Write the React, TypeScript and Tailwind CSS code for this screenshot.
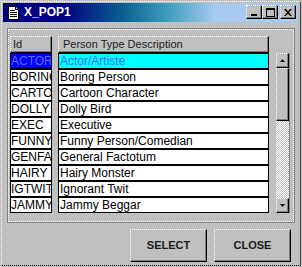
import React from "react";

const rows: [string, string][] = [
  ["ACTOR", "Actor/Artiste"],
  ["BORING", "Boring Person"],
  ["CARTOON", "Cartoon Character"],
  ["DOLLY", "Dolly Bird"],
  ["EXEC", "Executive"],
  ["FUNNY", "Funny Person/Comedian"],
  ["GENFAC", "General Factotum"],
  ["HAIRY", "Hairy Monster"],
  ["IGTWIT", "Ignorant Twit"],
  ["JAMMY", "Jammy Beggar"],
];

const raised =
  "bg-[#c0c0c0] border border-t-white border-l-white border-r-black border-b-black [border-style:dotted_solid_solid_dotted] shadow-[inset_-1px_-1px_0_#808080]";

function DocIcon() {
  return (
    <svg width="11" height="14" viewBox="0 0 11 14">
      <path d="M0.5 0.5 H7.5 L10.5 3.5 V13.5 H0.5 Z" fill="#ffffff" stroke="#000000" />
      <path d="M7.5 0.5 V3.5 H10.5" fill="#c0c0c0" stroke="#000000" />
      <rect x="2" y="4" width="5" height="1" fill="#000" />
      <rect x="2" y="6" width="7" height="1" fill="#000" />
      <rect x="2" y="8" width="7" height="1" fill="#000" />
      <rect x="2" y="10" width="7" height="1" fill="#000" />
    </svg>
  );
}

export default function App() {
  return (
    <div
      className="w-[302px] h-[267px] bg-[#c0c0c0] pl-[1px] pt-[1px] overflow-hidden"
      style={{ fontFamily: '"Liberation Sans", Arial, sans-serif' }}
    >
      <div className="w-[300px] h-[265px] border border-t-white border-l-white border-r-[#404040] border-b-black [border-style:dotted_solid_dotted_dotted] flex flex-col">
        {/* Title bar */}
        <div className="ml-[1px] mt-[1px] w-[295px] h-[19px] flex items-start bg-[linear-gradient(to_right,#000080_0%,#000080_20%,#0a5c90_40%,#3a9ab8_55%,#a6caf0_72%,#a6caf0_100%)]">
          <div className="ml-[5px] mt-[3px]">
            <DocIcon />
          </div>
          <div className="ml-[5px] mt-[2px] text-white font-bold text-[12px] leading-[15px]">
            X_POP1
          </div>
          <div className="ml-auto mr-[2px] mt-[2px] flex">
            <div className={`${raised} w-[16px] h-[14px] flex items-end justify-center pb-[2px]`}>
              <div className="w-[6px] h-[2px] bg-black" />
            </div>
            <div className={`${raised} w-[16px] h-[14px] flex items-center justify-center`}>
              <div className="w-[9px] h-[9px] border border-black border-t-2" />
            </div>
            <div className={`${raised} ml-[2px] w-[16px] h-[14px] flex items-center justify-center`}>
              <svg width="8" height="7" viewBox="0 0 8 7">
                <path d="M0 0 L2 0 L4 2.5 L6 0 L8 0 L5 3.5 L8 7 L6 7 L4 4.5 L2 7 L0 7 L3 3.5 Z" fill="#000" />
              </svg>
            </div>
          </div>
        </div>

        {/* Panel */}
        <div className="ml-[5px] mt-[6px] w-[288px] h-[195px] border border-[#808080]">
          <div className="w-full h-full border border-white border-dotted pt-[6px] pl-[1px] flex">
            {/* Id column */}
            <div className="w-[42px] flex flex-col">
              <div className={`${raised} h-[17px] text-[11px] leading-[14px] pl-[2px] text-[#202020]`}>Id</div>
              {rows.map(([id], i) => (
                <div
                  key={id}
                  className={`h-[16px] border border-black overflow-hidden whitespace-nowrap text-[12px] leading-[14px] ${
                    i === 0 ? "bg-[#0000ff] text-[#5a6cff]" : "bg-white text-black"
                  }`}
                >
                  {id}
                </div>
              ))}
            </div>
            {/* Description column */}
            <div className="ml-[6px] w-[211px] flex flex-col">
              <div className={`${raised} h-[17px] text-[11px] leading-[14px] pl-[4px] text-[#202020]`}>
                Person Type Description
              </div>
              {rows.map(([id, d], i) => (
                <div
                  key={id}
                  className={`h-[16px] border border-black overflow-hidden whitespace-nowrap text-[12px] leading-[14px] pl-[1px] ${
                    i === 0 ? "bg-[#00ffff] text-[#3c6cff]" : "bg-white text-black"
                  }`}
                >
                  {d}
                </div>
              ))}
            </div>
            {/* Scrollbar */}
            <div className="ml-[7px] mt-[17px] w-[14px] h-[160px] flex flex-col border-r border-[#808080]">
              <div className={`${raised} h-[15px] flex items-center justify-center`}>
                <svg width="5" height="3" viewBox="0 0 5 3">
                  <path d="M2.5 0 L5 3 L0 3 Z" fill="#000" />
                </svg>
              </div>
              <div className={`${raised} h-[53px]`} />
              <div className="flex-1 bg-[repeating-conic-gradient(#ffffff_0%_25%,#c0c0c0_0%_50%)] bg-[length:2px_2px]" />
              <div className={`${raised} h-[15px] flex items-center justify-center`}>
                <svg width="5" height="3" viewBox="0 0 5 3">
                  <path d="M0 0 L5 0 L2.5 3 Z" fill="#000" />
                </svg>
              </div>
            </div>
          </div>
        </div>

        {/* Buttons */}
        <div className="mt-[6px] ml-[128px] flex gap-[7px]">
          <div className={`${raised} w-[77px] h-[33px] flex items-center justify-center text-[11px] font-bold text-[#1a1a1a]`}>
            SELECT
          </div>
          <div className={`${raised} w-[77px] h-[33px] flex items-center justify-center text-[11px] font-bold text-[#1a1a1a]`}>
            CLOSE
          </div>
        </div>
      </div>
    </div>
  );
}
